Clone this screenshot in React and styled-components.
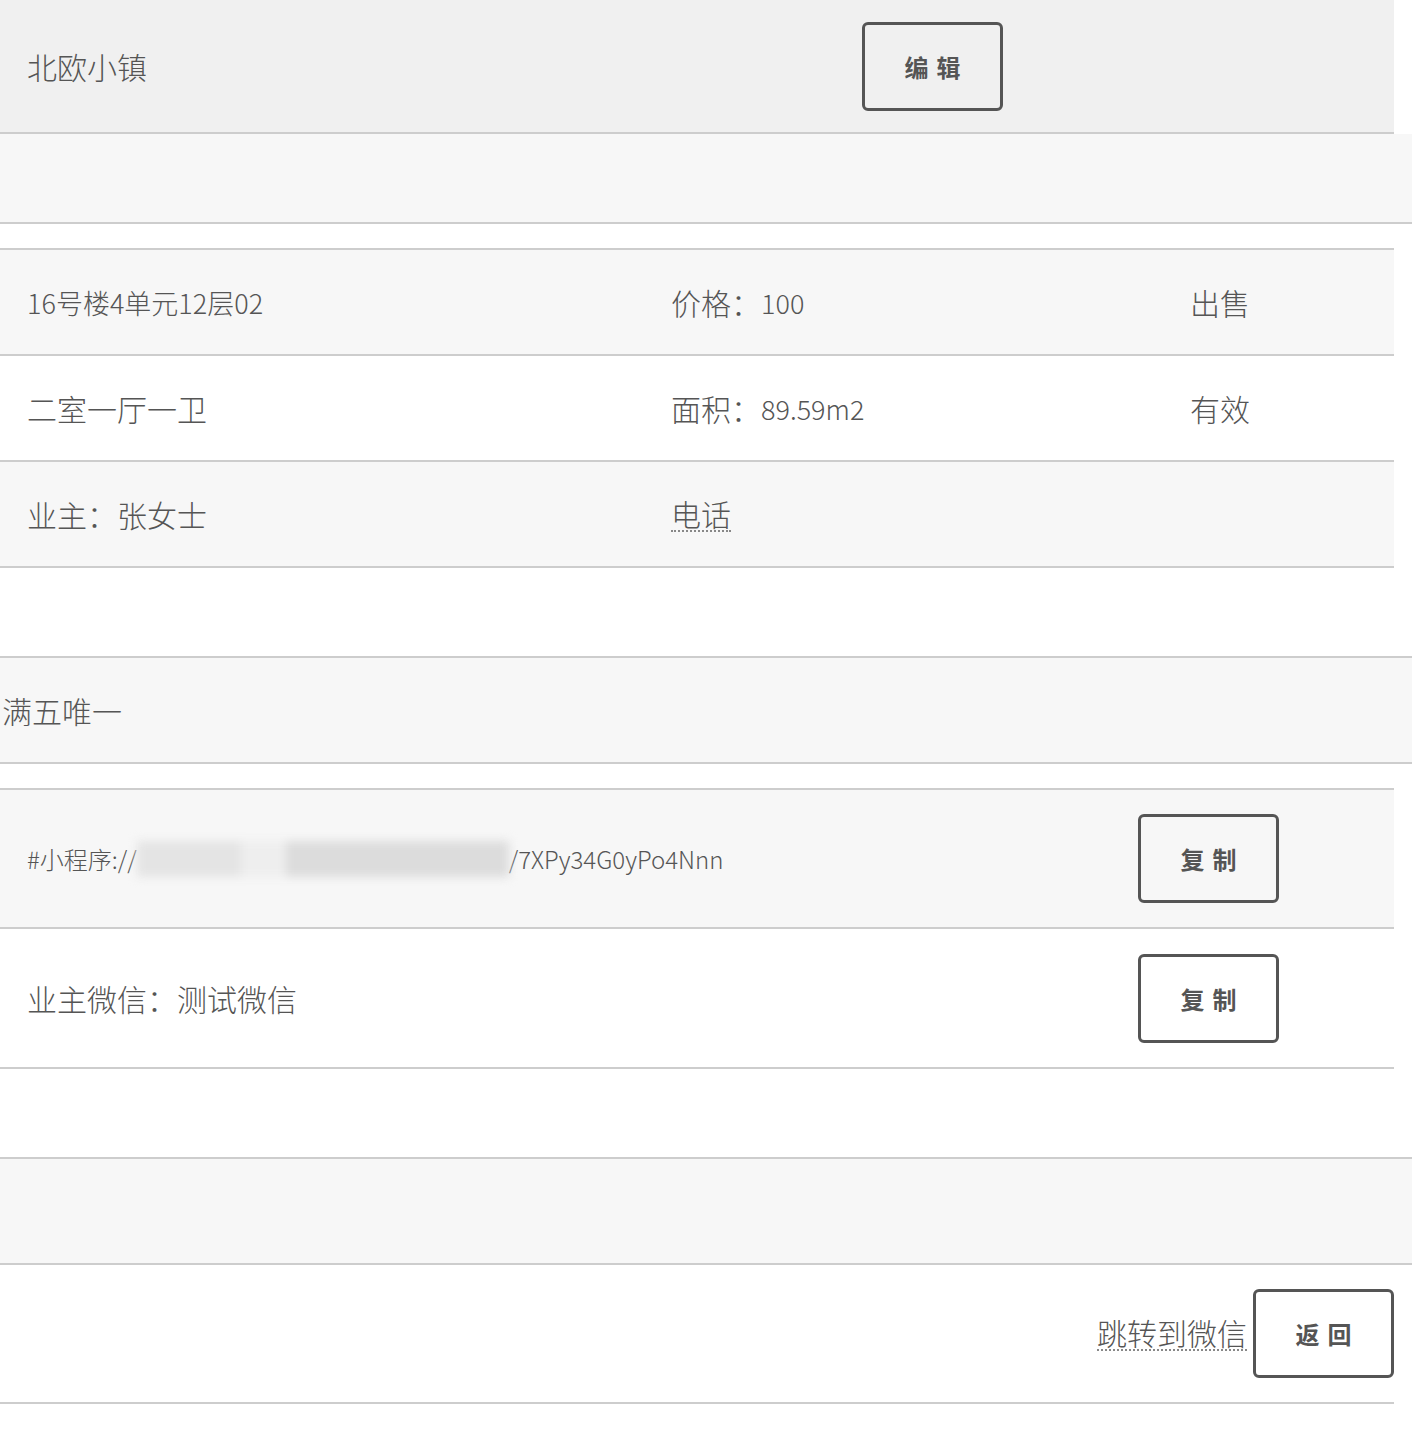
import React from 'react';
import styled, { createGlobalStyle } from 'styled-components';

const Global = createGlobalStyle`
  body {
    margin: 0;
    background: #fff;
    font-family: "Noto Sans CJK SC", "Noto Sans", sans-serif;
    color: #555;
  }
`;

const Row = styled.div`
  box-sizing: border-box;
  width: ${p => (p.full ? '1412px' : '1394px')};
  height: ${p => p.h}px;
  background: ${p => p.bg || '#fff'};
  border-bottom: 2px solid #cdcdcd;
  border-top: ${p => (p.top ? '2px solid #cdcdcd' : 'none')};
  margin-top: ${p => p.mt || 0}px;
  display: flex;
  align-items: center;
  padding-left: ${p => (p.pl === undefined ? 27 : p.pl)}px;
  font-size: 30px;
  font-weight: 300;
`;

const Cell = styled.div`
  width: ${p => p.w}px;
  flex-shrink: 0;
  display: flex;
  align-items: center;
`;

const Num = styled.span`
  font-size: 27px;
`;

const Dotted = styled.span`
  border-bottom: 2px dotted #888;
  line-height: 1.1;
`;

const Button = styled.button`
  box-sizing: border-box;
  width: 141px;
  height: 89px;
  background: transparent;
  border: 3px solid #555;
  border-radius: 6px;
  font-family: "Noto Sans CJK SC", sans-serif;
  font-weight: 700;
  font-size: 24px;
  letter-spacing: 8px;
  padding-left: 14px;
  color: #555;
`;

const Link = styled.span`
  font-size: 24px;
  display: flex;
  align-items: center;
`;

const Blur = styled.span`
  display: inline-block;
  width: 372px;
  height: 36px;
  background: linear-gradient(90deg, #e4e4e4 0 28%, #eeeeee 28% 40%, #dcdcdc 40% 100%);
  filter: blur(5px);
`;

const Spacer = styled.div`
  flex: 1;
`;

const Footer = styled(Row)`
  justify-content: flex-end;
  padding-right: 0;
  gap: 6px;
`;

export default function App() {
  return (
    <>
      <Global />
      <Row h={134} bg="#f0f0f0">
        <Cell w={835}>北欧小镇</Cell>
        <Button>编辑</Button>
      </Row>
      <Row h={90} bg="#f7f7f7" full />
      <Row h={108} bg="#f7f7f7" mt={24} top>
        <Cell w={644}><Num>16号楼4单元12层02</Num></Cell>
        <Cell w={519}>价格：<Num>100</Num></Cell>
        <Cell w={200}>出售</Cell>
      </Row>
      <Row h={106}>
        <Cell w={644}>二室一厅一卫</Cell>
        <Cell w={519}>面积：<Num>89.59m2</Num></Cell>
        <Cell w={200}>有效</Cell>
      </Row>
      <Row h={106} bg="#f7f7f7">
        <Cell w={644}>业主：张女士</Cell>
        <Cell w={519}><Dotted>电话</Dotted></Cell>
      </Row>
      <Row h={108} bg="#f7f7f7" full top mt={88} pl={2}>满五唯一</Row>
      <Row h={141} bg="#f7f7f7" mt={24} top>
        <Cell w={1111}>
          <Link>#小程序://<Blur />/7XPy34G0yPo4Nnn</Link>
        </Cell>
        <Button>复制</Button>
      </Row>
      <Row h={140}>
        <Cell w={1111}>业主微信：测试微信</Cell>
        <Button>复制</Button>
      </Row>
      <Row h={108} bg="#f7f7f7" full top mt={88} />
      <Footer h={139}>
        <Dotted>跳转到微信</Dotted>
        <Button>返回</Button>
      </Footer>
    </>
  );
}
